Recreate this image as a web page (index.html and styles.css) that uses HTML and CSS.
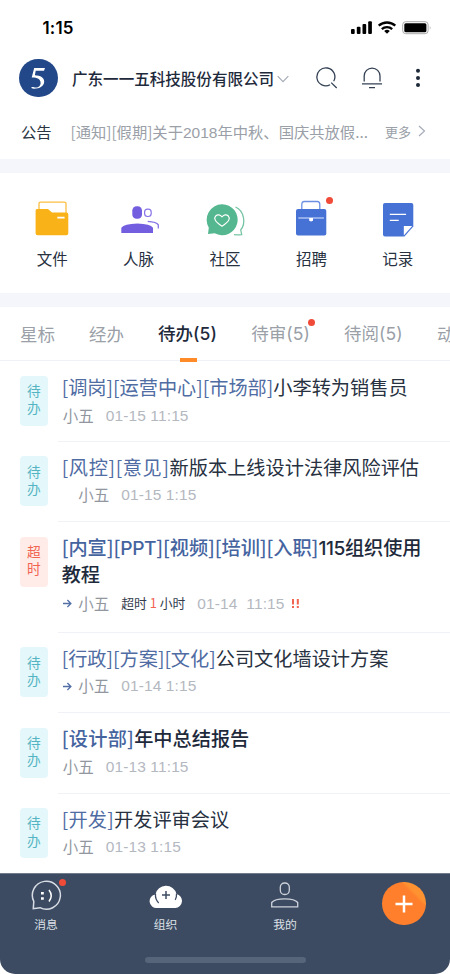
FILE: index.html
```html
<!DOCTYPE html>
<html lang="zh-CN">
<head>
<meta charset="utf-8">
<title>待办</title>
<link rel="stylesheet" href="styles.css">
</head>
<body>
<div class="phone">
  <div class="status">
    <span class="clock">1:15</span>
    <svg class="status-icons" width="82" height="16" viewBox="0 0 82 16">
      <rect x="0" y="9" width="3.7" height="5" rx="1"/><rect x="5.8" y="6.8" width="3.7" height="7.2" rx="1"/><rect x="11.5" y="4" width="3.7" height="10" rx="1"/><rect x="17.2" y="1.2" width="3.7" height="12.8" rx="1"/>
      <path d="M27.7 5.7a12.3 12.3 0 0 1 16.6 0M30.8 9.2a7.7 7.7 0 0 1 10.4 0" fill="none" stroke="#000" stroke-width="2.3"/>
      <path d="M33.2 11a4.2 4.2 0 0 1 5.6 0L36 13.8z"/>
      <rect x="51.7" y="1.7" width="25.4" height="12" rx="3" fill="#fff" stroke="#aaa" stroke-width="1"/>
      <rect x="53.3" y="3.2" width="22.1" height="9" rx="1.5"/><path d="M78.8 5.7q1.5 2 0 4z" fill="#aaa"/>
    </svg>
  </div>
  <header class="head">
    <div class="logo">
      <svg width="38" height="38" viewBox="0 0 38 38"><path d="M15.2 9H26l-1 2.800h-8.300l-.8 4.500c5.600.3 9.300 2.400 9.300 6.300 0 4.700-4.500 7.200-10.200 7.200-1.800 0-2.800-.5-2.700-1.200.1-.9 1.400-.9 2.700-.3 4 1.200 6.600-1.400 6.600-4.400 0-3.600-3.400-5.400-8.900-5.300z" fill="#fff"/></svg>
    </div>
    <span class="company">广东一一五科技股份有限公司</span>
    <svg class="caret" width="12" height="8" viewBox="0 0 12 8"><path d="M.7 1.2 6 6.7l5.3-5.5"/></svg>
    <svg class="tool search" width="22" height="22" viewBox="0 0 22 22"><path d="M14.1 17.8a9 9 0 1 1 3.6-3.5M15.2 15.6l5.5 5.4"/></svg>
    <svg class="tool bell" width="22" height="22" viewBox="0 0 22 22"><path d="M3.2 14.5V9a7.900 7.900 0 0 1 15.800 0v5.500M1 16.800h20M8 20.700h6"/></svg>
    <svg class="dots" width="6" height="20" viewBox="0 0 6 20"><circle cx="3" cy="2.7" r="2"/><circle cx="3" cy="9.9" r="2"/><circle cx="3" cy="17.1" r="2"/></svg>
  </header>
  <div class="notice">
    <span class="notice-label">公告</span>
    <span class="notice-text">[通知][假期]关于<em>2018</em>年中秋、国庆共放假...</span>
    <span class="more">更多</span>
    <svg width="8" height="12" viewBox="0 0 8 12"><path d="m1 1 5.500 5L1 11"/></svg>
  </div>
  <nav class="apps">
    <a class="app"><svg width="40" height="40" viewBox="0 0 40 40"><path d="M7 12V4.800q0-1.700 1.700-1.700h23.500Q34 3.100 34 4.800V16" fill="#fff" stroke="#fbbf42" stroke-width="1.300"/><path d="M5 10h11l4 3.500h14.500q1.800 0 1.800 1.800V34.200q0 2-2 2H5.600q-2 0-2-2V11.500Q3.600 10 5 10z" fill="#f9b218"/><path d="M25.300 18.700h7.300" stroke="#fff" stroke-width="1.700"/></svg><span>文件</span></a>
    <a class="app"><svg width="40" height="40" viewBox="0 0 40 40"><rect x="13.300" y="7.300" width="9.700" height="12.500" rx="4.300" fill="#745ee0"/><path d="M2.300 34v-5.200Q5 25 18.300 24.500q13.200.5 15.700 4.300V34z" fill="#745ee0"/><rect x="25.600" y="10.100" width="6.600" height="7.400" rx="3" fill="none" stroke="#8974e7" stroke-width="1.200"/><path d="M28.700 22.300q8.800.5 10.600 3.500v3.700" fill="none" stroke="#8974e7" stroke-width="1.300"/></svg><span>人脉</span></a>
    <a class="app"><svg width="44" height="40" viewBox="-2 0 44 40"><path d="M30.500 8c9 4 10.500 16.500 5.200 22.800l1 4.800q-3.500.4-7.700.1" fill="none" stroke="#77c4a4" stroke-width="1.300"/><path d="M17 5.200a15.500 15.500 0 1 1-7.300 29.100L3 35l.8-6.300A15.600 15.600 0 0 1 17 5.200z" fill="#54b78f"/><path d="M17 27.200c-7.800-4.700-8.200-8.200-6.300-10.200 2-2 4.500-1.200 6.300.8 1.800-2 4.300-2.800 6.300-.8 1.900 2 1.500 5.500-6.300 10.200z" fill="none" stroke="#fff" stroke-width="1.100"/></svg><span>社区</span></a>
    <a class="app"><svg width="40" height="40" viewBox="0 0 40 40"><path d="M10.800 12V5.500q0-3 2.500-3h13q2.500 0 2.500 3v5" fill="none" stroke="#6c8fe4" stroke-width="1.300"/><rect x="5" y="10" width="30.300" height="26.400" rx="2" fill="#4672d5"/><path d="M7.300 19h25.600" stroke="#dce6ff" stroke-width="1.200"/><path d="M18.200 19H22v2.700l-1.900.8-1.900-.8z" fill="#fff"/></svg><i class="dot app-dot"></i><span>招聘</span></a>
    <a class="app"><svg width="40" height="40" viewBox="0 0 40 40"><path d="M7 4h26.300q2 0 2 2v21.500l-8.800 10H7q-2 0-2-2V6q0-2 2-2z" fill="#4672d5"/><path d="M25.800 36.500V27h8.400z" fill="#fff"/><path d="M11.800 15.300h16.300M11.800 21.300h8.900" stroke="#fff" stroke-width="1.300"/></svg><span>记录</span></a>
  </nav>
  <div class="tabs">
    <span>星标</span><span>经办</span><span class="active">待办<em>(5)</em></span><span>待审<em>(5)</em><i class="dot tab-dot"></i></span><span>待阅<em>(5)</em></span><span>动</span>
  </div>
  <main>
    <article class="item">
      <div class="tag">待<br>办</div>
      <div class="body"><h2><b>[调岗][运营中心][市场部]</b>小李转为销售员</h2>
      <p><span>小五</span><time>01-15 11:15</time></p></div>
    </article>
    <article class="item">
      <div class="tag">待<br>办</div>
      <div class="body"><h2><b class="loose">[风控][意见]</b>新版本上线设计法律风险评估</h2>
      <p><span class="indent">小五</span><time>01-15 1:15</time></p></div>
    </article>
    <article class="item tall strong">
      <div class="tag late">超<br>时</div>
      <div class="body"><h2><b>[内宣][<em>PPT</em>][视频][培训][入职]</b><em>115</em>组织使用教程</h2>
      <p><svg class="arrow" width="9" height="9" viewBox="0 0 9 9"><path d="M0 4.500h8M4.400 1l3.500 3.500L4.400 8"/></svg><span>小五</span><span class="overdue">超时 <i>1</i> 小时</span><time>01-14 &nbsp;11:15</time><svg class="urgent" width="9" height="9" viewBox="0 0 9 9"><path d="M2 0v5.500M2 7v2M6.800 0v5.500M6.800 7v2"/></svg></p></div>
    </article>
    <article class="item">
      <div class="tag">待<br>办</div>
      <div class="body"><h2><b>[行政][方案][文化]</b>公司文化墙设计方案</h2>
      <p><svg class="arrow" width="9" height="9" viewBox="0 0 9 9"><path d="M0 4.500h8M4.400 1l3.500 3.500L4.400 8"/></svg><span>小五</span><time>01-14 1:15</time></p></div>
    </article>
    <article class="item strong">
      <div class="tag">待<br>办</div>
      <div class="body"><h2><b class="wider">[设计部]</b>年中总结报告</h2>
      <p><span>小五</span><time>01-13 11:15</time></p></div>
    </article>
    <article class="item">
      <div class="tag">待<br>办</div>
      <div class="body"><h2><b class="wider">[开发]</b>开发评审会议</h2>
      <p><span>小五</span><time>01-13 1:15</time></p></div>
    </article>
  </main>
  <footer class="bar">
    <div class="bar-row">
      <a class="bar-item"><svg width="34" height="34" viewBox="0 0 34 34"><path d="M4.800 21.400A14 14 0 1 1 11 27.700L4.300 28.700z" fill="none" stroke="#d8dde5" stroke-width="1.500"/><path d="M12 12h2.800v2.500H12zM12 17.300h2.800v2.500H12z" fill="#fff"/><path d="M20 10q4.400 5.700 0 11.500" fill="none" stroke="#fff" stroke-width="1.500"/></svg><i class="dot bar-dot"></i><span>消息</span></a>
      <a class="bar-item"><svg width="34" height="34" viewBox="0 -1 34 34"><path d="M8 27a6.800 6.800 0 0 1-1.600-13.500A10.800 10.800 0 0 1 27.500 13 7.100 7.100 0 0 1 26.300 27z" fill="#fff"/><path d="M6.500 12.800q-.5 5.500 3.200 9.200M27.500 12.800q.3 3.500-1.300 6" fill="none" stroke="#3d4b62" stroke-width="1.300"/><path d="M17 10v8M13 14h8" stroke="#3d4b62" stroke-width="1.500"/></svg><span>组织</span></a>
      <a class="bar-item"><svg width="34" height="34" viewBox="0 0 34 34"><rect x="12.300" y="3" width="9" height="11.500" rx="4.300"/><path d="M3.700 26.800v-4.300Q6.500 18.800 16.700 18.800T29.700 22.500v4.300z"/></svg><span>我的</span></a>
      <a class="add"><svg width="18" height="18" viewBox="0 0 18 18"><path d="M9 .5v17M.5 9h17"/></svg></a>
    </div>
    <div class="home"></div>
  </footer>
</div>
</body>
</html>
```
FILE: styles.css
```css
* { box-sizing: border-box; }
body { margin: 0; background: #fff; color: #27313f; font-family: "Noto Sans CJK SC", sans-serif; }
svg { display: block; flex: none; }
i, em { font-style: normal; }
.phone { width: 450px; height: 974px; overflow: hidden; display: flex; flex-direction: column; border-radius: 15px; white-space: nowrap; }
.status { height: 56px; padding: 0 18px 0 42.500px; display: flex; justify-content: space-between; align-items: center; }
.clock { color: #000; font: 600 17px/20px Inter, sans-serif; letter-spacing: .15px; }
.status-icons { margin-right: -.5px; }
.head { height: 44px; display: flex; align-items: center; padding-left: 19px; }
.logo { width: 38.500px; height: 38.500px; border-radius: 50%; background: #234889; }
.company { margin-left: 14.500px; width: 203px; font-size: 15.550px; font-weight: 500; line-height: 24px; color: #1e2a3b; }
.caret { margin: 2px 0 0 2px; }
.caret path, .notice path { fill: none; stroke: #a6acb7; stroke-width: 1.200; }
.tool { fill: none; stroke: #344154; stroke-width: 1.300; }
.search { margin-left: 27px; }
.bell { margin-left: 23px; }
.dots { margin-left: 31.500px; fill: #1d2838; }
.notice { height: 59px; display: flex; align-items: center; padding: 3px 0 0 21px; }
.notice-label { font-size: 15.300px; width: 49.500px; color: #2a3442; }
.notice-text { width: 314.500px; font-size: 15.300px; color: #9a9fa8; }
.notice-text em { font-family: "Liberation Sans", sans-serif; font-size: 15.500px; }
.more { font-size: 13px; color: #9a9fa8; width: 33px; }
.apps { height: 148px; border: solid #f4f6fb; border-width: 14px 0; padding: 26px 9px 0; display: grid; grid-template-columns: repeat(5, 1fr); }
.app { display: flex; flex-direction: column; align-items: center; position: relative; }
.app span { font-size: 15.500px; line-height: 24px; margin-top: 7px; }
.dot { position: absolute; width: 7px; height: 7px; border-radius: 50%; background: #f04b38; }
.app-dot { left: 58px; top: -2px; }
.tabs { height: 54.300px; padding: 0 0 0 20px; border-bottom: 1px solid #eff1f6; display: flex; align-items: center; gap: 34px; font-size: 17.500px; color: #9a9fa8; }
.tabs span { position: relative; flex: none; line-height: 26px; }
.tabs em { font-family: Inter, sans-serif; letter-spacing: .15px; }
.tabs .active { font-weight: 500; color: #1e2a3b; }
.active::after { content: ""; position: absolute; left: 21.500px; bottom: -15px; width: 17px; height: 4px; background: #ff8b28; }
.tab-dot { right: -4.500px; top: -1px; }
main { flex: none; height: 511.700px; }
.item { height: 80.400px; padding-left: 19.500px; display: flex; }
.tall { height: 110.700px; }
.tag { margin: 14.600px 9.500px 0 0; width: 28.700px; height: 50px; border-radius: 4px; background: #e4f8fb; color: #55b4c2; font-size: 13.700px; line-height: 17.200px; padding-top: 6.300px; text-align: center; }
.late { background: #ffece8; color: #f26452; }
.body { flex: 1; padding: 13px 0 0 4px; border-bottom: 1px solid #f0f2f7; }
.item:last-child .body { border: 0; }
h2 { margin: 0; width: 370px; font-size: 19.200px; line-height: 27px; font-weight: 400; white-space: normal; }
.item + .item h2 { margin: -1px 0 1px; }
h2 b { font-weight: inherit; color: #4f6ca3; }
.loose { letter-spacing: .65px; }
.wider { letter-spacing: .25px; }
.strong h2 { font-weight: 500; color: #1e2a3b; }
.strong h2 b { color: #45649f; }
.tall h2 { line-height: 26.300px; letter-spacing: -.06px; }
h2 em { font-family: Inter, sans-serif; letter-spacing: -.4px; }
.body p { margin: 2.400px 0 0 1px; height: 24px; display: flex; align-items: center; font-size: 15.500px; color: #92979f; }
.body p span { padding-bottom: 2px; }
.tall p { margin-top: 4px; }
time { margin-left: 12px; font-family: "Liberation Sans", sans-serif; letter-spacing: .12px; color: #b4b8bf; }
.indent { margin-left: 15.500px; }
.arrow { margin-right: 6.500px; fill: none; stroke: #526fa8; stroke-width: 1.300; }
.overdue { margin-left: 12px; font-size: 12.800px; color: #343e4e; }
.overdue i { color: #f26452; }
.urgent { margin-left: 6px; stroke: #f26452; stroke-width: 2; }
.bar { flex: 1; background: #3d4b62; padding-top: 6px; border-top: 1px solid #717b8b; }
.bar-row { display: flex; height: 77.500px; padding-left: 29px; }
.bar-item { position: relative; width: 34px; margin-right: 85.500px; display: flex; flex-direction: column; align-items: center; color: #dce0e6; font-size: 11.800px; line-height: 16px; }
.bar-item svg { fill: none; stroke-width: 1.300; stroke: #cdd2da; }
.bar-item:nth-child(-n+2) svg { stroke: none; }
.bar-item span { margin-top: 2px; }
.bar-dot { left: 30px; top: -1px; }
.add { width: 43.500px; height: 43.500px; margin: 2px 0 0 -5.500px; border-radius: 50%; background: linear-gradient(45deg, #ff7f2c 70%, #ff9332 76%); display: flex; align-items: center; justify-content: center; }
.add path { stroke: #fff; stroke-width: 2.500; }
.home { width: 161px; height: 6px; margin-left: 145px; border-radius: 3px; background: #56657a; }
```
